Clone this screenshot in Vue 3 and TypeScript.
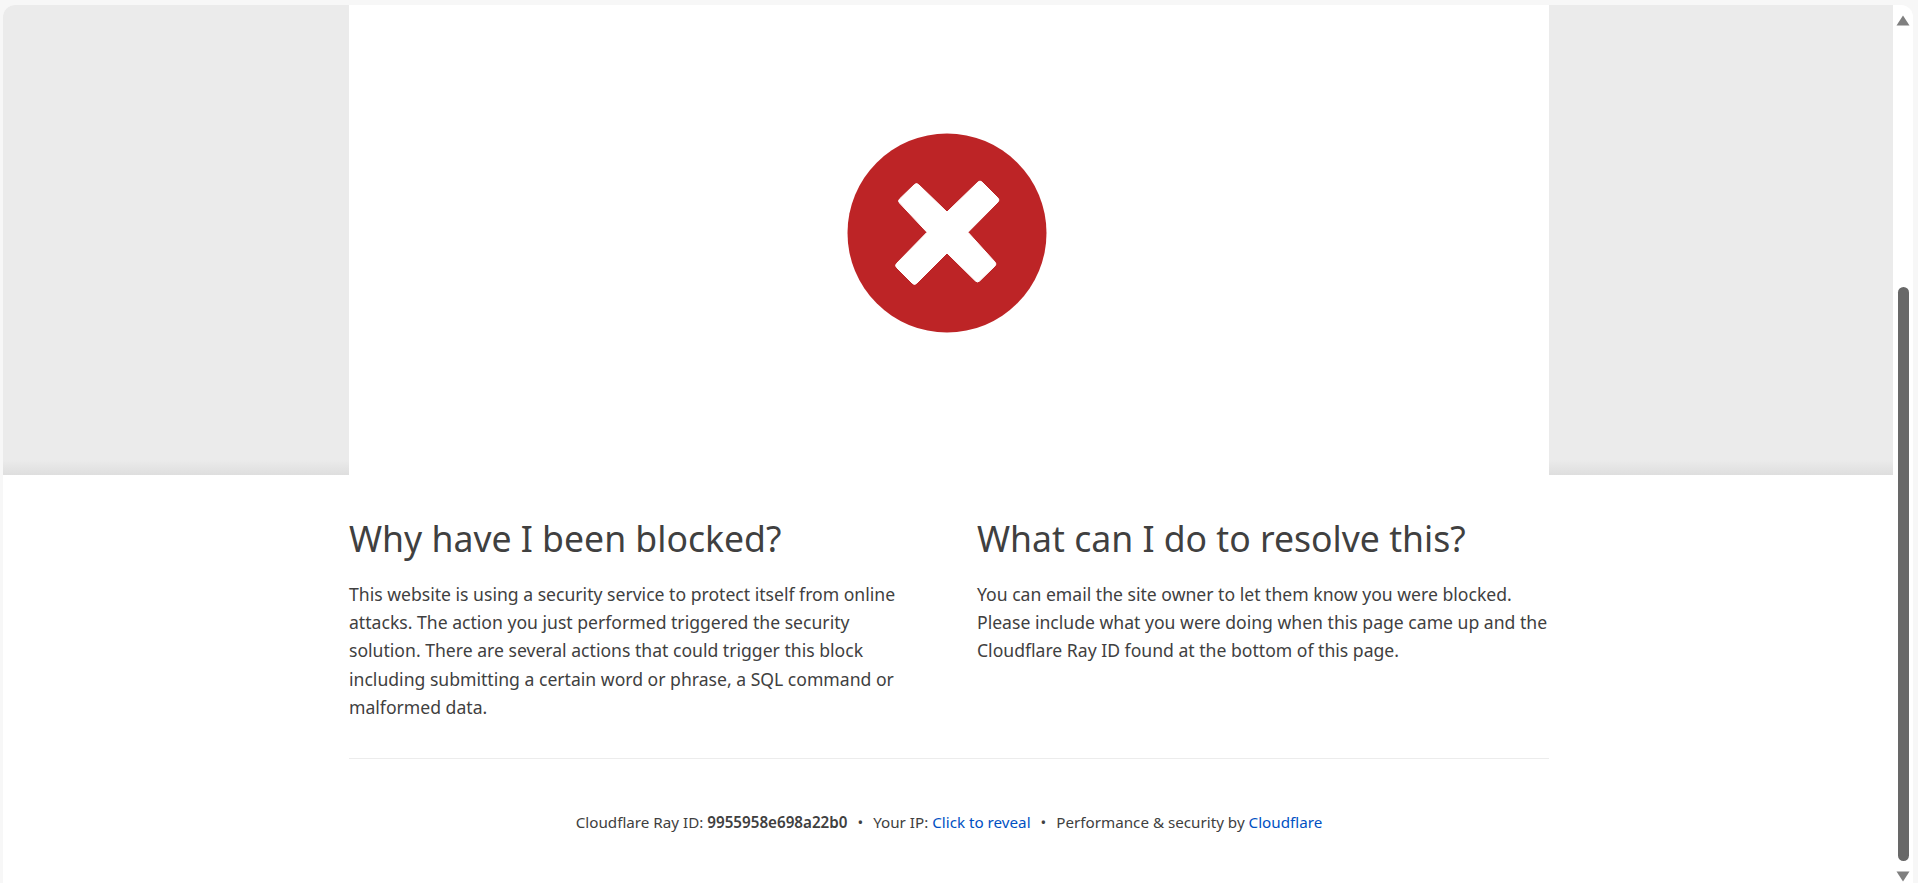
<script setup lang="ts">
const reasons: string[] = [
  'This website is using a security service to protect itself from online attacks. The action you just performed triggered the security solution. There are several actions that could trigger this block including submitting a certain word or phrase, a SQL command or malformed data.',
  'You can email the site owner to let them know you were blocked. Please include what you were doing when this page came up and the Cloudflare Ray ID found at the bottom of this page.',
];
</script>

<template>
  <div class="window">
    <div class="page">
      <div class="band">
        <div class="band-inner">
          <svg class="blocked-icon" width="200" height="200" viewBox="0 0 200 200">
            <circle cx="100" cy="100" r="99.5" fill="#bd2426" />
            <path
              fill="#fff"
              stroke="#fff"
              stroke-width="1"
              stroke-linejoin="round"
              transform="translate(1 0)"
              d="M66.4 51.6 Q68.5 49.5 70.6 51.6 L99 79 L129.9 49.1 Q132 47 134.1 49.1 L149.9 64.9 Q152 67 149.9 69.1 L120 99.3 L146.9 128.9 Q149 131 146.9 133.1 L131.6 148 Q129.5 150 127.4 147.9 L99 120 L68.6 150.4 Q66.5 152.5 64.4 150.4 L48.6 134.6 Q46.5 132.5 48.6 130.4 L79 99.3 L51.6 70.1 Q49.5 68 51.6 65.9 Z"
            />
          </svg>
        </div>
      </div>
      <div class="content">
        <div class="columns">
          <div class="col">
            <h2>Why have I been blocked?</h2>
            <p>{{ reasons[0] }}</p>
          </div>
          <div class="col">
            <h2>What can I do to resolve this?</h2>
            <p>{{ reasons[1] }}</p>
          </div>
        </div>
        <div class="footer">
          <span>Cloudflare Ray ID: <strong>9955958e698a22b0</strong></span>
          <span class="sep">•</span>
          <span>Your IP: <a href="#">Click to reveal</a></span>
          <span class="sep">•</span>
          <span>Performance &amp; security by <a href="#">Cloudflare</a></span>
        </div>
      </div>
    </div>
    <div class="scrollbar">
      <svg class="arrow" width="14" height="11" viewBox="0 0 14 11"><path d="M7 0.5 L13.5 10.5 H0.5 Z" fill="#7f7f7f" /></svg>
      <div class="thumb" />
      <svg class="arrow" width="14" height="11" viewBox="0 0 14 11"><path d="M0.5 0.5 H13.5 L7 10.5 Z" fill="#7f7f7f" /></svg>
    </div>
  </div>
</template>

<style>
html, body {
  margin: 0;
  background: #f7f7f7;
  overflow: hidden;
}
</style>

<style scoped>
.window {
  display: flex;
  width: 1913px;
  height: 878px;
  margin-top: 5px;
  font-family: "Noto Sans", "Open Sans", sans-serif;
  color: #404040;
}
.page {
  flex: 1;
  margin-left: 3px;
  min-width: 0;
  border-radius: 12px 0 0 0;
  overflow: hidden;
  background: #fff;
}
.band {
  height: 470px;
  background: linear-gradient(to bottom, #ebebeb 0, #ebebeb 455px, #dedede 470px);
}
.band-inner {
  width: 1200px;
  height: 100%;
  margin-left: 346px;
  background: #fff;
  display: flex;
  justify-content: center;
  padding: 128px 4px 0 0;
  box-sizing: border-box;
}
.blocked-icon {
  display: block;
}
.content {
  width: 1200px;
  margin-left: 346px;
}
.columns {
  display: grid;
  grid-template-columns: 572px 572px;
  gap: 56px;
  padding: 38px 0 37px;
  border-bottom: 1px solid #ececec;
}
h2 {
  margin: 0 0 17px;
  font-size: 35.6px;
  line-height: 50px;
  font-weight: 400;
}
p {
  margin: 0;
  font-size: 17.6px;
  line-height: 28.2px;
}
.footer {
  display: flex;
  justify-content: center;
  gap: 10px;
  padding-top: 52px;
  font-size: 15.2px;
  line-height: 22px;
}
strong {
  font-weight: 600;
}
a {
  color: #0051c3;
  text-decoration: none;
}
.scrollbar {
  width: 20px;
  display: flex;
  flex-direction: column;
  align-items: center;
  padding-top: 10px;
  box-sizing: border-box;
  flex-shrink: 0;
  background: #fff;
  border-radius: 0 12px 0 0;
}
.thumb {
  width: 11px;
  height: 574px;
  margin-top: 261px;
  border-radius: 6px;
  background: #686868;
}
.arrow {
  display: block;
}
.thumb + .arrow {
  margin-top: 10px;
}
</style>
